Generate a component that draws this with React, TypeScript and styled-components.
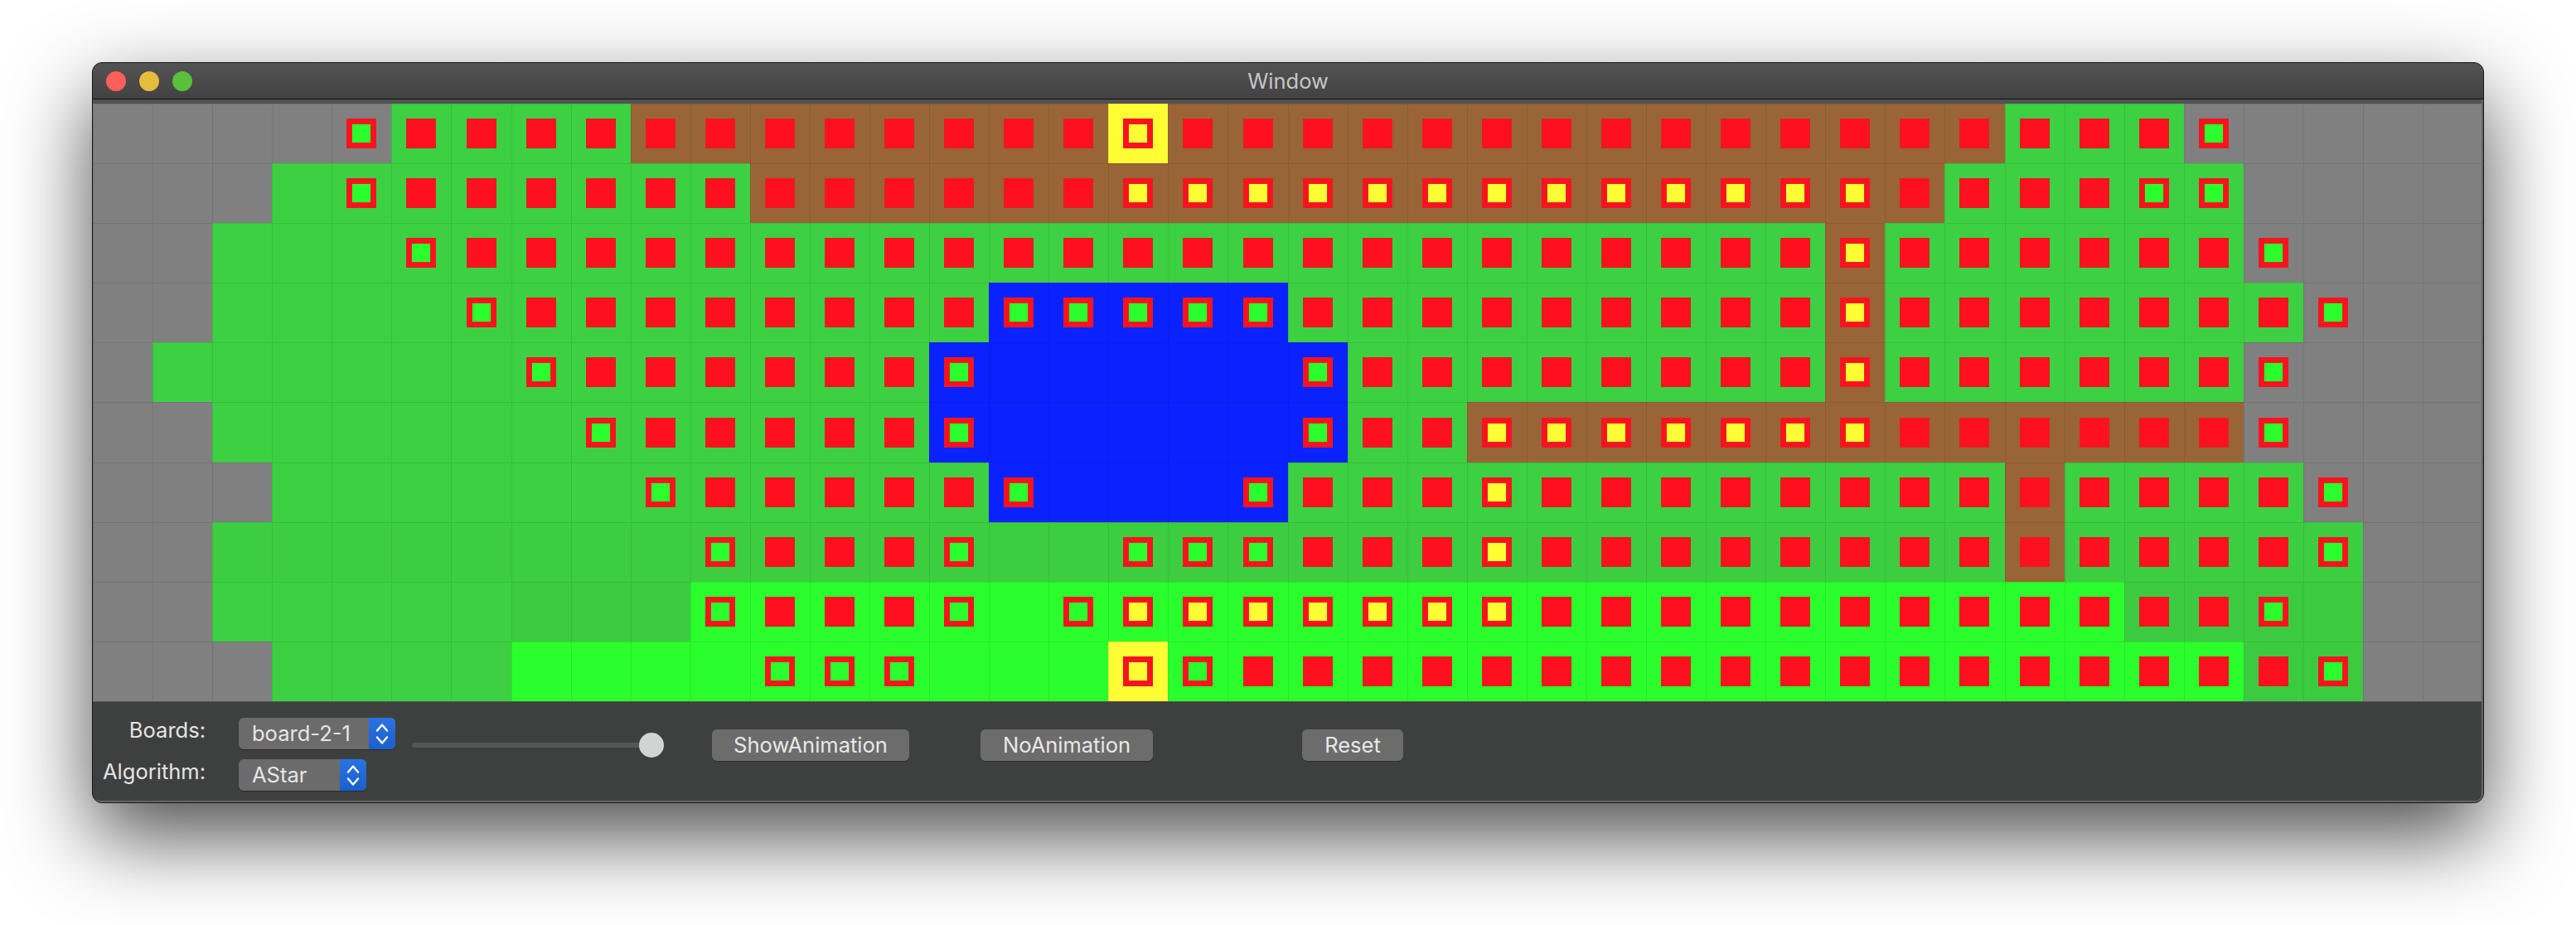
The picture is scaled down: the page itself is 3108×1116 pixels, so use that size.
import React from "react";
import styled, { createGlobalStyle } from "styled-components";

const GlobalStyle = createGlobalStyle`
  html, body { margin: 0; padding: 0; background: #fff; overflow: hidden; }
  #root { width: 3108px; height: 1116px; }
  * { box-sizing: border-box; }
`;

const TERRAIN: Record<string, string> = {
  x: "#808080",
  g: "#3dd042",
  m: "#3dcd41",
  d: "#3ccb40",
  l: "#2aff2d",
  b: "#996536",
  w: "#0a22ff",
  y: "#fffd33",
};

const TERRAIN_ROWS = [
  "x5 g4 b8 y1 b14 g3 x5",
  "x3 g8 b20 g5 x4",
  "x2 g27 b1 g6 x4",
  "x2 g13 w5 g9 b1 g7 x3",
  "x1 g13 w7 g8 b1 g6 x4",
  "x2 g12 w7 g2 b13 x4",
  "x3 g12 w5 g12 b1 g4 x3",
  "x2 m30 b1 m5 x2",
  "x2 g5 d3 l24 d4 x2",
  "x3 g4 l10 y1 l18 d2 x2",
];

const MARKER_ROWS = [
  "_4 o1 r12 Y1 r17 o1 _4",
  "_4 o1 r12 Y13 r4 o2 _4",
  "_5 o1 r23 Y1 r6 o1 _3",
  "_6 o1 r8 o5 r9 Y1 r7 o1 _2",
  "_7 o1 r6 o1 _5 o1 r8 Y1 r6 o1 _3",
  "_8 o1 r5 o1 _5 o1 r2 Y7 r6 o1 _3",
  "_9 o1 r5 o1 _3 o1 r3 Y1 r13 o1 _2",
  "_10 o1 r3 o1 _2 o3 r3 Y1 r13 o1 _2",
  "_10 o1 r3 o1 _1 o1 Y7 r12 o1 _3",
  "_11 o3 _3 Y1 o1 r18 o1 _2",
];

const expand = (row: string): string[] =>
  row.split(" ").flatMap((run) => Array<string>(Number(run.slice(1))).fill(run[0]));

const Page = styled.div`
  padding: 75px 0 0 111px;
  font-family: Inter, "Liberation Sans", sans-serif;
`;

const Window = styled.div`
  width: 2886px;
  height: 894px;
  display: flex;
  flex-direction: column;
  border: 1px solid #161616;
  border-radius: 12px;
  background: #3e403f;
  overflow: hidden;
  box-shadow: 0 40px 100px rgba(0, 0, 0, 0.7);
`;

const TitleBar = styled.div`
  position: relative;
  height: 44px;
  flex: none;
  display: flex;
  align-items: center;
  justify-content: center;
  background: linear-gradient(#535353, #424242);
  border-bottom: 1px solid #0e0e0e;
`;

const Lights = styled.div`
  position: absolute;
  left: 16px;
  top: 10px;
  display: flex;
  gap: 16px;
`;

const Light = styled.span<{ $color: string }>`
  width: 24px;
  height: 24px;
  border-radius: 50%;
  background: ${(p) => p.$color};
`;

const Title = styled.div`
  font-size: 25.5px;
  color: #c6c6c6;
`;

const Frame = styled.div`
  flex: 1;
  min-width: 0;
  display: flex;
  flex-direction: column;
  border: solid #666666;
  border-width: 0 2px 2px 0;
  border-radius: 0 0 10px 10px;
  overflow: hidden;
`;

const TopBand = styled.div`
  height: 5px;
  flex: none;
  background: #525252;
`;

const Board = styled.div`
  height: 721px;
  flex: none;
  display: grid;
  grid-template-columns: repeat(40, 72.08px);
  grid-template-rows: repeat(10, 1fr);
`;

const Cell = styled.div<{ $bg: string }>`
  display: flex;
  align-items: center;
  justify-content: center;
  background: ${(p) => p.$bg};
  box-shadow: inset 1px 1px 0 rgba(0, 0, 0, 0.09);
`;

const Marker = styled.div<{ $inner?: string }>`
  width: 36px;
  height: 36px;
  display: flex;
  align-items: center;
  justify-content: center;
  background: #fe101f;
  box-shadow: inset 0 0 0 1px rgba(120, 90, 40, 0.2);
  &::after {
    content: "";
    display: ${(p) => (p.$inner ? "block" : "none")};
    width: 22px;
    height: 22px;
    background: ${(p) => p.$inner};
    box-shadow: 0 0 0 1px rgba(140, 110, 40, 0.25);
  }
`;

const Panel = styled.div`
  flex: 1;
  display: flex;
  align-items: flex-start;
  padding: 19px 0 0 12px;
  background: #3e403f;
  border-top: 1px solid #555;
`;

const Form = styled.div`
  display: grid;
  grid-template-columns: 124px auto;
  justify-content: start;
  align-items: center;
  column-gap: 40px;
  row-gap: 12px;
`;

const Label = styled.label`
  text-align: right;
  font-size: 25.5px;
  line-height: 30px;
  color: #e4e4e4;
  margin-top: -8px;
`;

const Select = styled.div<{ $width: number }>`
  width: ${(p) => p.$width}px;
  height: 38px;
  display: flex;
  border-radius: 6px;
  overflow: hidden;
  background: #6b6b6b;
  box-shadow: 0 1px 1px rgba(0, 0, 0, 0.35);
`;

const SelectText = styled.div`
  flex: 1;
  padding-left: 16px;
  font-size: 25.5px;
  line-height: 38px;
  color: #e6e6e6;
`;

const Stepper = styled.div`
  width: 32px;
  flex: none;
  display: flex;
  flex-direction: column;
  align-items: center;
  justify-content: center;
  gap: 5px;
  background: linear-gradient(#2a72e4, #1a60cc);
`;

const Slider = styled.div`
  position: relative;
  width: 304px;
  height: 6px;
  margin: 30px 0 0 20px;
  border-radius: 3px;
  background: #555757;
`;

const Thumb = styled.div`
  position: absolute;
  right: 0;
  top: -12px;
  width: 30px;
  height: 30px;
  border-radius: 50%;
  background: #d2d4d3;
`;

const Button = styled.button<{ $gap: number; $width: number }>`
  width: ${(p) => p.$width}px;
  height: 38px;
  flex: none;
  margin: 14px 0 0 ${(p) => p.$gap}px;
  padding: 0;
  border: 0;
  border-radius: 6px;
  background: #6c6c6c;
  box-shadow: 0 1px 1px rgba(0, 0, 0, 0.3);
  color: #e8e8e8;
  font-family: inherit;
  font-size: 25.5px;
  line-height: 36px;
`;

const Chevron = ({ up }: { up?: boolean }) => (
  <svg width="16" height="10" viewBox="0 0 16 10" fill="none" stroke="#fff" strokeWidth="2.4" strokeLinecap="round" strokeLinejoin="round">
    <path d={up ? "M2 8.5 L8 1.5 L14 8.5" : "M2 1.5 L8 8.5 L14 1.5"} />
  </svg>
);

const Dropdown = ({ value, width }: { value: string; width: number }) => (
  <Select $width={width}>
    <SelectText>{value}</SelectText>
    <Stepper>
      <Chevron up />
      <Chevron />
    </Stepper>
  </Select>
);

export default function App() {
  return (
    <>
      <GlobalStyle />
      <Page>
        <Window>
          <TitleBar>
            <Lights>
              <Light $color="#fe5f58" />
              <Light $color="#e5bd3c" />
              <Light $color="#5ac03b" />
            </Lights>
            <Title>Window</Title>
          </TitleBar>
          <Frame>
            <TopBand />
            <Board>
              {TERRAIN_ROWS.map((row, r) => {
                const markers = expand(MARKER_ROWS[r]);
                return expand(row).map((kind, c) => {
                  const m = markers[c];
                  return (
                    <Cell key={`${r}-${c}`} $bg={TERRAIN[kind]}>
                      {m === "r" && <Marker />}
                      {m === "o" && <Marker $inner="#2aff2d" />}
                      {m === "Y" && <Marker $inner="#fffd33" />}
                    </Cell>
                  );
                });
              })}
            </Board>
            <Panel>
              <Form>
                <Label>Boards:</Label>
                <Dropdown value="board-2-1" width={189} />
                <Label>Algorithm:</Label>
                <Dropdown value="AStar" width={154} />
              </Form>
              <Slider>
                <Thumb />
              </Slider>
              <Button $gap={58} $width={238}>ShowAnimation</Button>
              <Button $gap={86} $width={208}>NoAnimation</Button>
              <Button $gap={180} $width={122}>Reset</Button>
            </Panel>
          </Frame>
        </Window>
      </Page>
    </>
  );
}
